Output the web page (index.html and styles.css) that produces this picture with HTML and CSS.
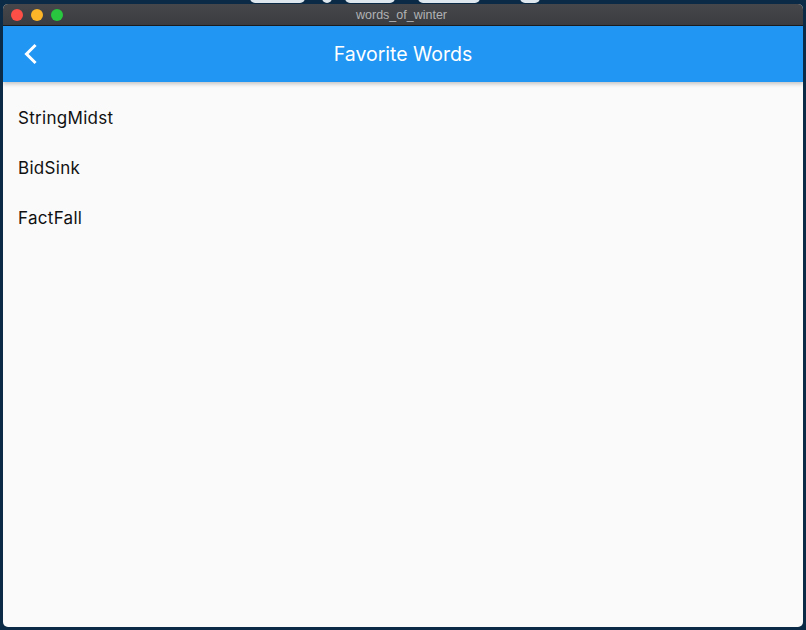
FILE: index.html
```html
<!DOCTYPE html>
<html>
<head>
<meta charset="utf-8">
<link rel="stylesheet" href="styles.css">
</head>
<body>
<div class="desktop">
  <div class="wallpaper">
    <span class="wp wp1"></span><span class="wp wp2"></span><span class="wp wp3"></span><span class="wp wp4"></span><span class="wp wp5"></span>
  </div>
  <div class="window">
    <div class="titlebar">
      <div class="lights">
        <span class="light red"></span>
        <span class="light yellow"></span>
        <span class="light green"></span>
      </div>
      <div class="wtitle">words_of_winter</div>
    </div>
    <div class="appbar">
      <button class="back" aria-label="Back">
        <svg width="24" height="24" viewBox="0 0 24 24"><path d="M15.5 4 L7.5 12 L15.5 20" fill="none" stroke="#fff" stroke-width="3" stroke-linecap="square" stroke-linejoin="miter"/></svg>
      </button>
      <div class="apptitle">Favorite Words</div>
    </div>
    <ul class="list">
      <li class="item">StringMidst</li>
      <li class="item">BidSink</li>
      <li class="item">FactFall</li>
    </ul>
  </div>
</div>
</body>
</html>
```
FILE: styles.css
```css
html, body {
  margin: 0;
  padding: 0;
  background: #0b2a45;
  width: 806px;
  height: 630px;
  overflow: hidden;
}
.desktop {
  position: relative;
  width: 806px;
  height: 630px;
  padding: 4px 3px 0 3px;
  box-sizing: border-box;
}
.wallpaper .wp {
  position: absolute;
  top: -8px;
  height: 11px;
  background: #dfe7ee;
  border-radius: 5px;
}
.wp1 { left: 250px; width: 55px; }
.wp2 { left: 322px; width: 10px; }
.wp3 { left: 345px; width: 50px; }
.wp4 { left: 418px; width: 62px; }
.wp5 { left: 520px; width: 20px; }
.window {
  position: relative;
  width: 800px;
  height: 623px;
  border-radius: 5px;
  overflow: hidden;
  background: #fafafa;
  display: flex;
  flex-direction: column;
}
.titlebar {
  height: 21px;
  background: linear-gradient(#45474a, #3a3c3f);
  border-bottom: 1px solid #1c1d1f;
  display: flex;
  align-items: center;
  justify-content: center;
  position: relative;
  flex: none;
}
.lights {
  position: absolute;
  left: 8px;
  top: 5px;
  display: flex;
  gap: 8px;
}
.light {
  width: 12px;
  height: 12px;
  border-radius: 50%;
  display: block;
}
.red { background: #fe4f47; }
.yellow { background: #fdb628; }
.green { background: #28c73f; }
.wtitle {
  font-family: "Liberation Sans", Arial, sans-serif;
  font-size: 12.5px;
  color: #b1b2b4;
  margin-left: -3px;
}
.appbar {
  height: 56px;
  background: #2196f3;
  display: flex;
  align-items: center;
  justify-content: center;
  position: relative;
  flex: none;
  box-shadow: 0 2px 4px rgba(0,0,0,0.22);
  z-index: 1;
}
.back {
  position: absolute;
  left: 16px;
  top: 16px;
  width: 24px;
  height: 24px;
  padding: 0;
  border: 0;
  background: none;
}
.back svg { display: block; }
.apptitle {
  font-family: Inter, "Noto Sans", sans-serif;
  font-size: 19.5px;
  color: #fff;
}
.list {
  list-style: none;
  margin: 0;
  padding: 11px 0 0 0;
}
.item {
  height: 50px;
  display: flex;
  align-items: center;
  padding-left: 15px;
  font-family: Inter, "Noto Sans", sans-serif;
  font-size: 17px;
  letter-spacing: 0.3px;
  color: #111;
}
```
